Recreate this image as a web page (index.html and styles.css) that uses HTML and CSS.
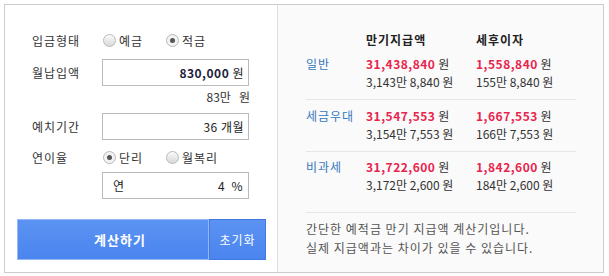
FILE: index.html
```html
<!DOCTYPE html>
<html>
 <head>
  <meta charset="utf-8">
  <link rel="stylesheet" href="styles.css">
 </head>
 <body>
  <div class="calc">
   <div class="form">
    <div class="row r-type">
     <span class="label">입금형태</span>
     <span class="opt"><span class="radio"></span>예금</span>
     <span class="opt"><span class="radio on"></span>적금</span>
    </div>
    <div class="row r-amount">
     <span class="label">월납입액</span>
     <div class="box"><b class="val">830,000</b>&nbsp;원</div>
    </div>
    <div class="hint">83만&nbsp;&nbsp; 원</div>
    <div class="row r-period">
     <span class="label">예치기간</span>
     <div class="box">36&nbsp;개월</div>
    </div>
    <div class="row r-rate">
     <span class="label">연이율</span>
     <span class="opt"><span class="radio on"></span>단리</span>
     <span class="opt"><span class="radio"></span>월복리</span>
    </div>
    <div class="row r-rateval">
     <span class="label"></span>
     <div class="box split"><span>연</span><span>4&nbsp; %</span></div>
    </div>
    <div class="buttons">
     <button class="btn calc-btn">계산하기</button>
     <button class="btn reset-btn">초기화</button>
    </div>
   </div>

   <div class="result">
    <div class="line head">
     <span class="kind"></span>
     <span class="c1">만기지급액</span>
     <span class="c2">세후이자</span>
    </div>
    <div class="group">
     <div class="line">
      <span class="kind">일반</span>
      <span class="c1"><b class="red">31,438,840</b> 원</span>
      <span class="c2"><b class="red">1,558,840</b> 원</span>
     </div>
     <div class="line">
      <span class="kind"></span>
      <span class="c1">3,143만 8,840 원</span>
      <span class="c2">155만 8,840 원</span>
     </div>
    </div>
    <div class="group">
     <div class="line">
      <span class="kind">세금우대</span>
      <span class="c1"><b class="red">31,547,553</b> 원</span>
      <span class="c2"><b class="red">1,667,553</b> 원</span>
     </div>
     <div class="line">
      <span class="kind"></span>
      <span class="c1">3,154만 7,553 원</span>
      <span class="c2">166만 7,553 원</span>
     </div>
    </div>
    <div class="group last">
     <div class="line">
      <span class="kind">비과세</span>
      <span class="c1"><b class="red">31,722,600</b> 원</span>
      <span class="c2"><b class="red">1,842,600</b> 원</span>
     </div>
     <div class="line">
      <span class="kind"></span>
      <span class="c1">3,172만 2,600 원</span>
      <span class="c2">184만 2,600 원</span>
     </div>
    </div>
    <p class="note">간단한 예적금 만기 지급액 계산기입니다.<br>실제 지급액과는 차이가 있을 수 있습니다.</p>
   </div>
  </div>
 </body>
</html>
```

FILE: styles.css
```css
body {
  margin: 0;
  background: #fff;
  font-family: "Noto Sans CJK KR", "Noto Sans", sans-serif;
  font-size: 12px;
  color: #333;
}

.calc {
  display: flex;
  margin: 4px;
  border: 1px solid #ccc;
  box-sizing: border-box;
  width: 600px;
  height: 269px;
}

/* left: form */
.form {
  width: 272px;
  padding: 22px 0 0 11px;
  box-sizing: border-box;
}
.row {
  display: flex;
  align-items: center;
}
.label {
  width: 70px;
  padding-left: 16px;
  flex: none;
  letter-spacing: 1px;
}
.r-type { height: 26px; }
.r-amount { margin-top: 6px; }
.r-period { margin-top: 6px; }
.r-rate { height: 22px; margin-top: 6px; }
.r-rateval { margin-top: 4px; }

.opt {
  display: flex;
  align-items: center;
  width: 63px;
  letter-spacing: 1px;
}
.radio {
  width: 13px;
  height: 13px;
  border-radius: 50%;
  border: 1px solid #b9b9b9;
  background: linear-gradient(#fbfbfb, #d8d8d8);
  box-sizing: border-box;
  margin: 0 3px 0 1px;
  position: relative;
}
.radio.on {
  background: #f2f2f2;
}
.radio.on::after {
  content: "";
  position: absolute;
  left: 3px;
  top: 3px;
  width: 5px;
  height: 5px;
  border-radius: 50%;
  background: #555;
}

.box {
  width: 147px;
  height: 27px;
  border: 1px solid #bbb;
  box-sizing: border-box;
  display: flex;
  align-items: center;
  justify-content: flex-end;
  padding: 0 4px 0 10px;
  color: #222;
  letter-spacing: 0.5px;
}
.box.split { justify-content: space-between; padding-right: 5px; }
.val { font-weight: bold; color: #1d1d3d; }

.hint {
  height: 20px;
  line-height: 20px;
  width: 234px;
  text-align: right;
  margin-top: 1px;
}

.buttons {
  display: flex;
  margin-top: 20px;
  padding-left: 1px;
}
.btn {
  height: 41px;
  color: #fff;
  font-family: "Noto Sans CJK KR", sans-serif;
  font-size: 13px;
  letter-spacing: 1px;
  background: linear-gradient(#5c93f3, #4a84ee);
  cursor: pointer;
}
.calc-btn {
  width: 192px;
  border: 1px solid #95b9f6;
  font-weight: bold;
  padding-left: 20px;
}
.reset-btn {
  width: 57px;
  border: 1px solid #4179e0;
  font-size: 12px;
}

/* right: result */
.result {
  flex: 1;
  background: #fafafa;
  border-left: 1px solid #ddd;
  padding: 26px 0 0 28px;
}
.line {
  display: flex;
  height: 18px;
  line-height: 18px;
}
.head { font-weight: bold; color: #222; margin-bottom: 6px; letter-spacing: 1px; }
.kind { width: 60px; color: #3778be; letter-spacing: 1px; }
.c1 { width: 110px; }
.c2 { width: 100px; }
.red { color: #e8254e; letter-spacing: 0.5px; }

.group {
  width: 270px;
  border-bottom: 1px solid #e6e6e6;
  padding-bottom: 8px;
}
.group + .group { padding-top: 7px; }
.group.last { padding-bottom: 18px; padding-top: 6px; }

.note {
  margin: 6px 0 0;
  line-height: 19px;
  color: #555;
  letter-spacing: 1px;
}
```
